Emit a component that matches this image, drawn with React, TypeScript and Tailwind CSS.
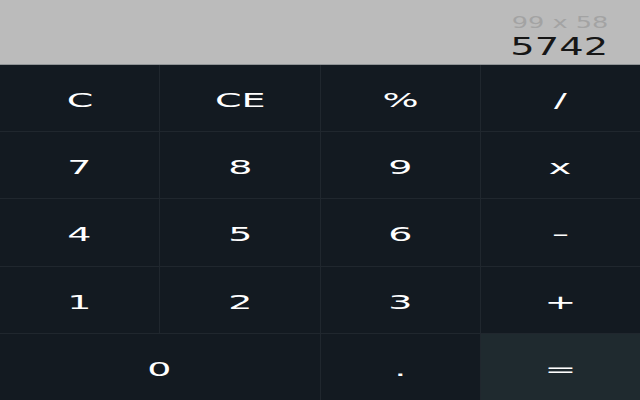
import React from 'react';

const keys: { label: string; span?: boolean; accent?: boolean }[] = [
  { label: 'C' }, { label: 'CE' }, { label: '%' }, { label: '/' },
  { label: '7' }, { label: '8' }, { label: '9' }, { label: 'x' },
  { label: '4' }, { label: '5' }, { label: '6' }, { label: '-' },
  { label: '1' }, { label: '2' }, { label: '3' }, { label: '+' },
  { label: '0', span: true }, { label: '.' }, { label: '=', accent: true },
];

export default function App() {
  return (
    <div
      className="w-[640px] h-[400px] flex flex-col overflow-hidden"
      style={{ fontFamily: '"DejaVu Sans", Verdana, sans-serif' }}
    >
      {/* Display */}
      <div className="h-[65px] shrink-0 bg-[#bbbbbb] flex flex-col items-end justify-center pt-[10px] pr-[32px] border-b border-[#8f9396]">
        <div className="text-[16px] leading-[20px] text-[#a3a3a3] scale-x-[1.6] origin-right">99 x 58</div>
        <div className="text-[24px] leading-[28px] text-[#161616] scale-x-[1.6] origin-right">5742</div>
      </div>

      {/* Keypad */}
      <div className="flex-1 grid grid-cols-4 grid-rows-5 gap-px bg-[#20272e]">
        {keys.map((k) => (
          <button
            key={k.label}
            className={
              (k.span ? 'col-span-2 ' : '') +
              (k.accent ? 'bg-[#1f2a2f] ' : 'bg-[#131a21] ') +
              'flex items-center justify-center pt-[4px] text-white text-[20px]'
            }
          >
            <span className={'inline-block ' + (k.label === '-' ? 'scale-x-[2.5]' : 'scale-x-[1.9]')}>{k.label}</span>
          </button>
        ))}
      </div>
    </div>
  );
}
